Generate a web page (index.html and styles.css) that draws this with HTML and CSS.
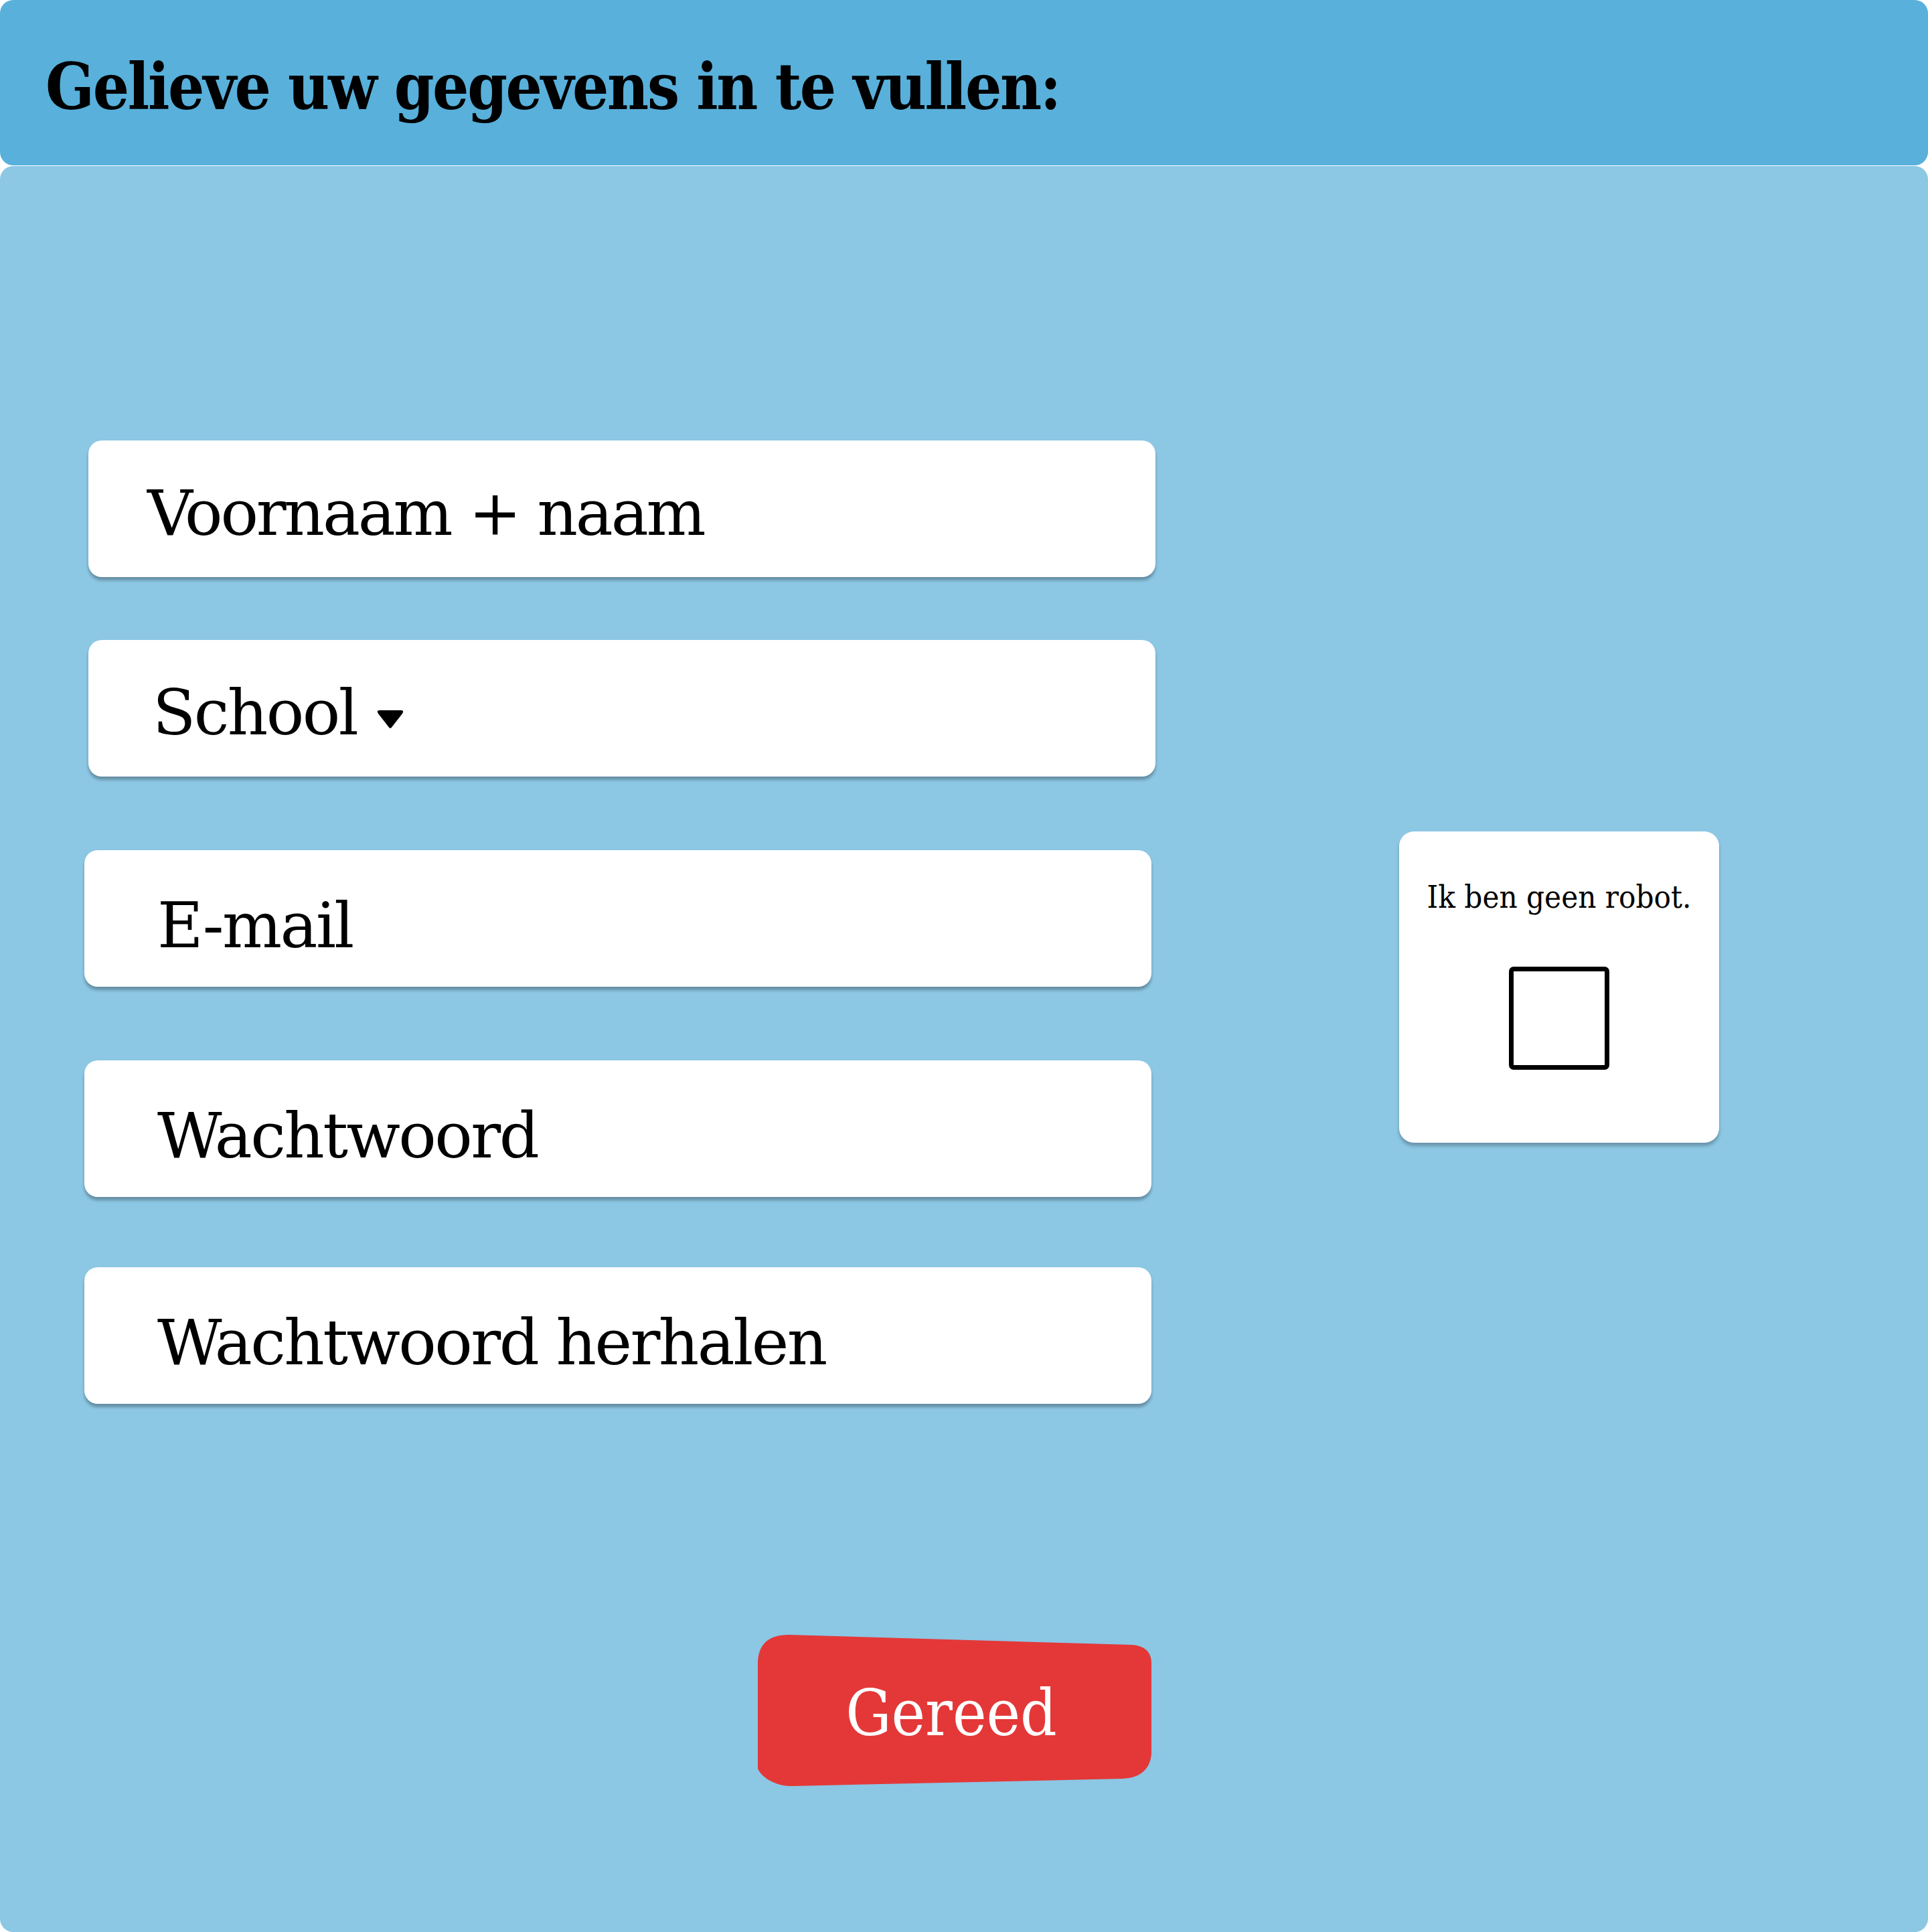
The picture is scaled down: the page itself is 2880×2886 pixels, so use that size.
FILE: index.html
```html
<!DOCTYPE html>
<html lang="nl">
<head>
<meta charset="utf-8">
<title>Registreren</title>
<link rel="stylesheet" href="styles.css">
</head>
<body>
<header class="header">
  <h1 class="title">Gelieve uw gegevens in te vullen:</h1>
</header>
<main class="panel">
  <div class="content">
    <form class="fields">
      <div class="field field--shift field--name"><span class="label">Voornaam + naam</span></div>
      <div class="field field--shift field--school gap-s"><span class="label">School</span>
        <svg class="caret" viewBox="0 0 40 27" aria-hidden="true"><path d="M4 0 H36 Q41 0 38 5 L22 25.5 Q20 28 18 25.5 L2 5 Q-1 0 4 0 Z"/></svg>
      </div>
      <div class="field field--wide gap-l"><span class="label">E-mail</span></div>
      <div class="field field--wide gap-l"><span class="label">Wachtwoord</span></div>
      <div class="field field--wide gap-m"><span class="label">Wachtwoord herhalen</span></div>
      <button class="submit" type="button">
        <svg class="submit-bg" viewBox="0 0 588 226" preserveAspectRatio="none" aria-hidden="true"><path d="M0 44 C0 14 16 0 46 0 L558 15 C578 16 588 26 588 42 L588 168 C590 198 574 214 545 215 L54 226 C28 227 6 214 0 200 Z"/></svg>
        <span class="submit-text">Gereed</span>
      </button>
    </form>
    <aside class="robot">
      <p class="robot-text">Ik ben geen robot.</p>
      <span class="checkbox"></span>
    </aside>
  </div>
</main>
</body>
</html>
```
FILE: styles.css
```css
html, body {
  margin: 0;
  padding: 0;
  background: #ffffff;
}

body {
  font-family: "DejaVu Serif", "Liberation Serif", serif;
  color: #000;
}

.title,
.robot-text,
.submit {
  font-family: "DejaVu Serif Condensed", "DejaVu Serif", "Liberation Serif", serif;
  font-stretch: semi-condensed;
}

.header {
  box-sizing: border-box;
  height: 247px;
  background: #58b0db;
  border-radius: 20px;
  padding: 82px 0 0 68px;
}

.title {
  margin: 0;
  font-size: 95px;
  font-weight: 700;
  line-height: 1;
  letter-spacing: -2.3px;
  white-space: nowrap;
}

.panel {
  box-sizing: border-box;
  margin-top: 1px;
  min-height: 2638px;
  background: #8cc7e4;
  border-radius: 20px;
  padding: 410px 0 0 126px;
}

.content {
  display: flex;
  align-items: flex-start;
}

.fields {
  display: flex;
  flex-direction: column;
  width: 1594px;
  margin: 0;
}

.field {
  box-sizing: border-box;
  height: 204px;
  background: #fff;
  border-radius: 20px;
  box-shadow: 0 5px 4px rgba(0, 0, 0, 0.28);
  display: flex;
  align-items: flex-start;
  padding-top: 62px;
  font-size: 94px;
  line-height: 1;
  letter-spacing: -2.6px;
}

.field--shift {
  margin-left: 6px;
  margin-right: -6px;
}

.field--name { padding-left: 88px; letter-spacing: -3.2px; }
.field--school { padding-left: 96px; }
.field--wide { padding-left: 109px; padding-top: 66px; }

.gap-s { margin-top: 94px; }
.gap-l { margin-top: 110px; }
.gap-m { margin-top: 105px; }

.label {
  white-space: nowrap;
}

.caret {
  width: 40px;
  height: 27px;
  margin: 43px 0 0 30px;
  fill: #000;
}

.submit {
  position: relative;
  align-self: flex-end;
  width: 588px;
  height: 226px;
  margin-top: 345px;
  padding: 8px 10px 0 0;
  border: 0;
  background: transparent;
  display: flex;
  align-items: center;
  justify-content: center;
  font-size: 95px;
  line-height: 1;
  color: #fff;
  cursor: pointer;
}

.submit-bg {
  position: absolute;
  inset: 0;
  width: 100%;
  height: 100%;
  fill: #e43838;
}

.submit-text {
  position: relative;
}

.robot {
  box-sizing: border-box;
  width: 478px;
  height: 465px;
  margin: 584px 0 0 370px;
  background: #fff;
  border-radius: 22px;
  box-shadow: 0 5px 5px rgba(0, 0, 0, 0.25);
  display: flex;
  flex-direction: column;
  align-items: center;
  padding-top: 74px;
}

.robot-text {
  margin: 0;
  font-size: 47px;
  line-height: 1;
  white-space: nowrap;
}

.checkbox {
  box-sizing: border-box;
  display: block;
  width: 150px;
  height: 154px;
  margin-top: 81px;
  border: 7px solid #000;
  border-radius: 7px;
}
```
